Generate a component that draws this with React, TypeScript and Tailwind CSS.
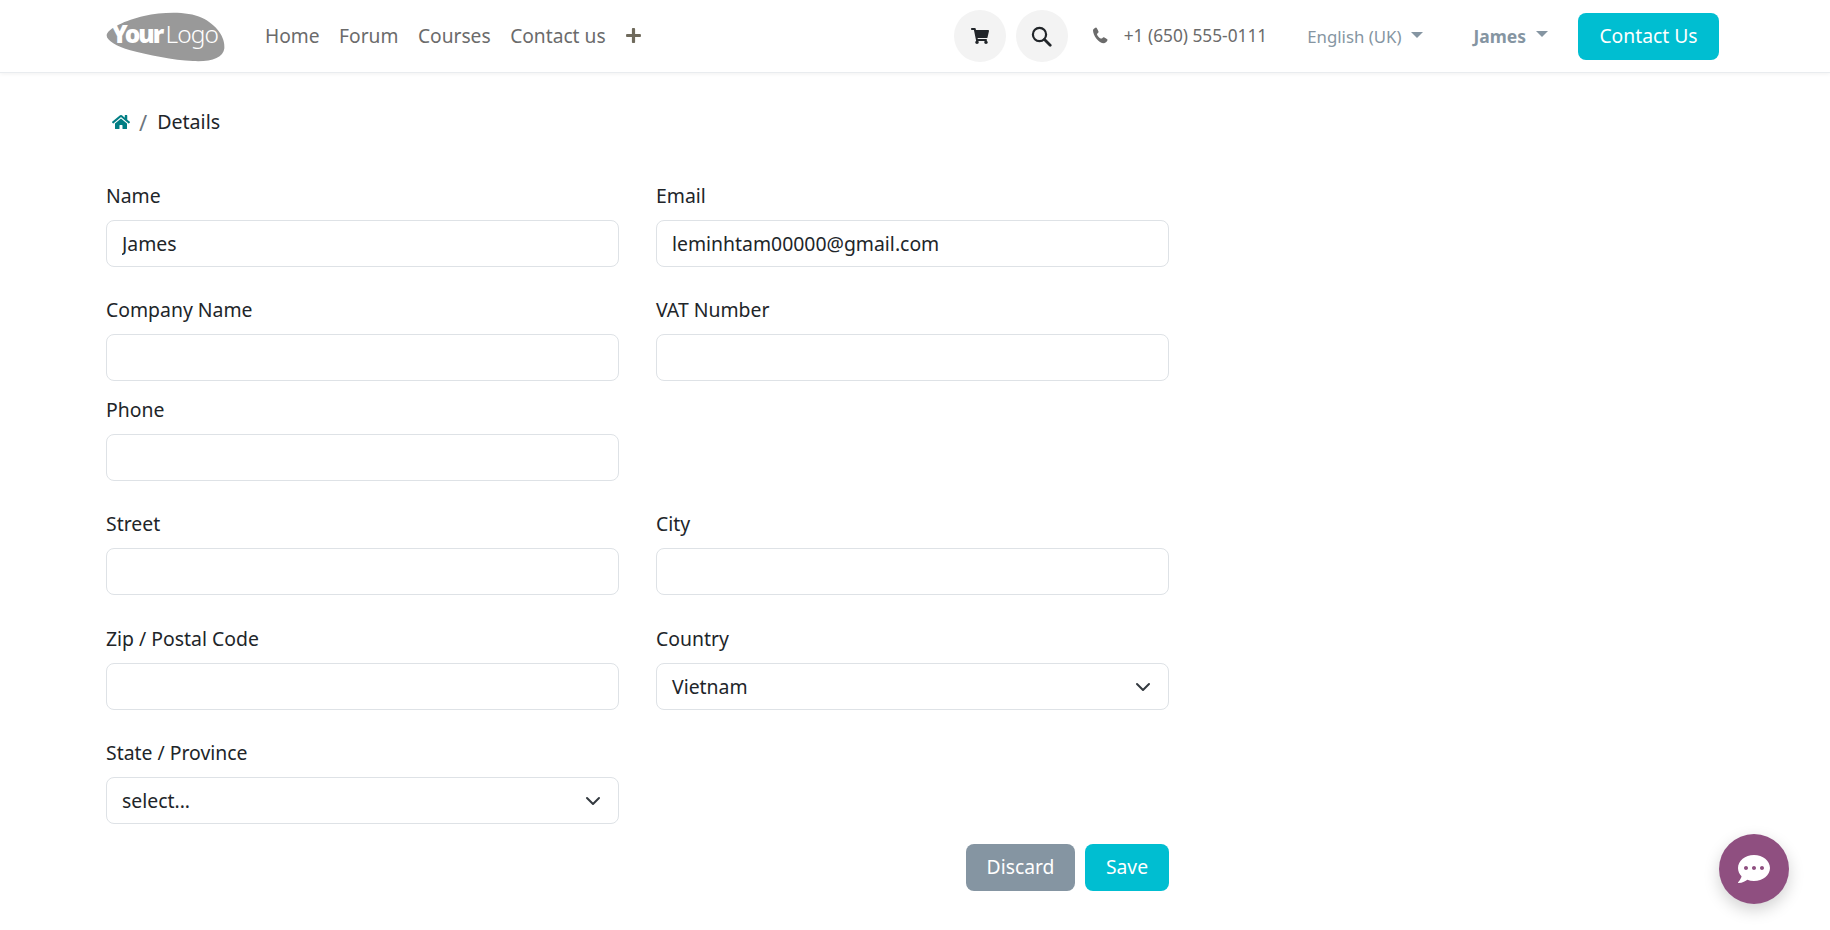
import React from "react";
import { FaHome, FaShoppingCart, FaPlus, FaCommentDots } from "react-icons/fa";

const font = "font-['Noto_Sans','Open_Sans',sans-serif]";

function Logo() {
  return (
    <svg width="121" height="51" viewBox="0 0 122 52" className="shrink-0">
      <path d="M0 25 C0 18 20 9 38 5 C58 1 82 0 97 7 C112 14 121 27 120 38 C119 48 106 52 88 51 C68 50 42 45 24 40 C10 36 0 30 0 25 Z" fill="#999999" />
      <text x="5" y="33" fill="#fff" fontFamily="'Noto Sans',sans-serif" fontSize="25" fontWeight="900" letterSpacing="-2">Your</text>
      <text x="60" y="33" fill="#fff" fontFamily="'Noto Sans',sans-serif" fontSize="25" fontWeight="300" letterSpacing="-0.9">Logo</text>
    </svg>
  );
}

function Caret() {
  return <span className="ml-[10px] inline-block h-0 w-0 -translate-y-[2px] border-x-[6px] border-t-[6px] border-x-transparent border-t-[#8595a2]" />;
}

function Field({ label, value, className = "" }: { label: string; value?: string; className?: string }) {
  return (
    <label className={"block " + className}>
      <span className="mb-[11px] block h-[26px] text-[19.4px] leading-[26px] text-[#212529]">{label}</span>
      <input
        readOnly
        value={value ?? ""}
        className="block h-[47px] w-full rounded-[8px] border border-[#dee2e6] bg-white px-[15px] text-[19.4px] text-[#212529] outline-none"
      />
    </label>
  );
}

function Select({ label, value }: { label: string; value: string }) {
  return (
    <div>
      <span className="mb-[11px] block h-[26px] text-[19.4px] leading-[26px] text-[#212529]">{label}</span>
      <div className="flex h-[47px] w-full items-center justify-between rounded-[8px] border border-[#dee2e6] bg-white pl-[15px] pr-[17px] text-[19.4px] text-[#212529]">
        <span>{value}</span>
        <svg width="16" height="16" viewBox="0 0 16 16" fill="none" stroke="#343a40" strokeWidth="2" strokeLinecap="round" strokeLinejoin="round">
          <path d="M2 5l6 6 6-6" />
        </svg>
      </div>
    </div>
  );
}

export default function App() {
  return (
    <div className={font + " relative h-[930px] w-[1830px] overflow-hidden bg-white"}>
      <header className="flex h-[73px] items-center border-b border-[#e9ecef] pl-[106px] pr-[111px] shadow-[0_1px_4px_rgba(0,0,0,0.06)]">
        <Logo />
        <nav className="ml-[38px] flex items-center gap-[19.5px] text-[19.2px] text-[#6b6b6b]">
          <span>Home</span>
          <span>Forum</span>
          <span>Courses</span>
          <span>Contact us</span>
          <FaPlus className="text-[17px] text-[#6f6a5c]" />
        </nav>
        <div className="ml-auto flex items-center">
          <span className="flex h-[52px] w-[52px] items-center justify-center rounded-full bg-[#f3f3f3]">
            <FaShoppingCart className="text-[18px] text-[#212529]" />
          </span>
          <span className="ml-[10px] flex h-[52px] w-[52px] items-center justify-center rounded-full bg-[#f3f3f3]">
            <svg width="21" height="21" viewBox="0 0 21 21" fill="none" stroke="#212529" strokeWidth="2.2" strokeLinecap="round">
              <circle cx="8.5" cy="8.5" r="6.6" />
              <path d="M13.5 13.5l5.7 5.7" strokeWidth="2.8" />
            </svg>
          </span>
          <svg width="16" height="17" viewBox="0 0 16 17" className="ml-[24px] -translate-y-[1px]" fill="#6b6b6b">
            <path d="M1 3.2 C1 2.4 3.4 0.6 4.1 0.6 C4.7 0.6 6.6 4.4 6.6 5 C6.6 5.8 5 6.4 5 7.2 C5 8.6 8 11.6 9.4 11.6 C10.2 11.6 10.8 10.2 11.6 10.2 C12.2 10.2 15.6 12.2 15.6 12.8 C15.6 14 13.4 16.2 12 16.2 C6.6 16.2 1 8.6 1 3.2 Z" />
          </svg>
          <span className="ml-[16px] text-[17.3px] text-[#6b6b6b]">+1 (650) 555-0111</span>
          <span className="ml-[40px] flex translate-y-[1px] items-center text-[16.8px] text-[#8595a2]">English (UK)<Caret /></span>
          <span className="ml-[50px] flex items-center text-[17.5px] font-bold text-[#8595a2]">James<Caret /></span>
          <span className="ml-[30px] flex h-[47px] w-[141px] items-center justify-center rounded-[8px] bg-[#00bed1] text-[19.3px] text-white">Contact Us</span>
        </div>
      </header>

      <main className="w-[1169px] pl-[106px]">
        <div className="mt-[35px] flex h-[27px] items-center pl-[6px] text-[19.6px] text-[#212529]">
          <FaHome className="text-[18px] text-[#017e84]" />
          <span className="ml-[9px] text-[22px] leading-none text-[#6c757d]">/</span>
          <span className="ml-[10px]">Details</span>
        </div>
        <div className="mt-[48px] grid grid-cols-2 gap-x-[37px]">
          <Field label="Name" value="James" className="mb-[30px]" />
          <Field label="Email" value="leminhtam00000@gmail.com" className="mb-[30px]" />
          <Field label="Company Name" className="mb-[16px]" />
          <Field label="VAT Number" className="mb-[16px]" />
          <Field label="Phone" className="col-span-1 mb-[30px]" />
          <div />
          <Field label="Street" className="mb-[31px]" />
          <Field label="City" className="mb-[31px]" />
          <Field label="Zip / Postal Code" className="mb-[30px]" />
          <div className="mb-[30px]"><Select label="Country" value="Vietnam" /></div>
          <Select label="State / Province" value="select..." />
        </div>
        <div className="mt-[20px] flex justify-end gap-[10px]">
          <button className="h-[47px] w-[109px] rounded-[8px] bg-[#8595a2] text-[19.3px] text-white">Discard</button>
          <button className="h-[47px] w-[84px] rounded-[8px] bg-[#00bed1] text-[19.3px] text-white">Save</button>
        </div>
      </main>

      <div className="absolute left-[1719px] top-[834px] flex h-[70px] w-[70px] items-center justify-center rounded-full bg-[#8f4f80] shadow-[0_6px_16px_rgba(0,0,0,0.18)]">
        <FaCommentDots className="text-[32px] text-white" />
      </div>
    </div>
  );
}
